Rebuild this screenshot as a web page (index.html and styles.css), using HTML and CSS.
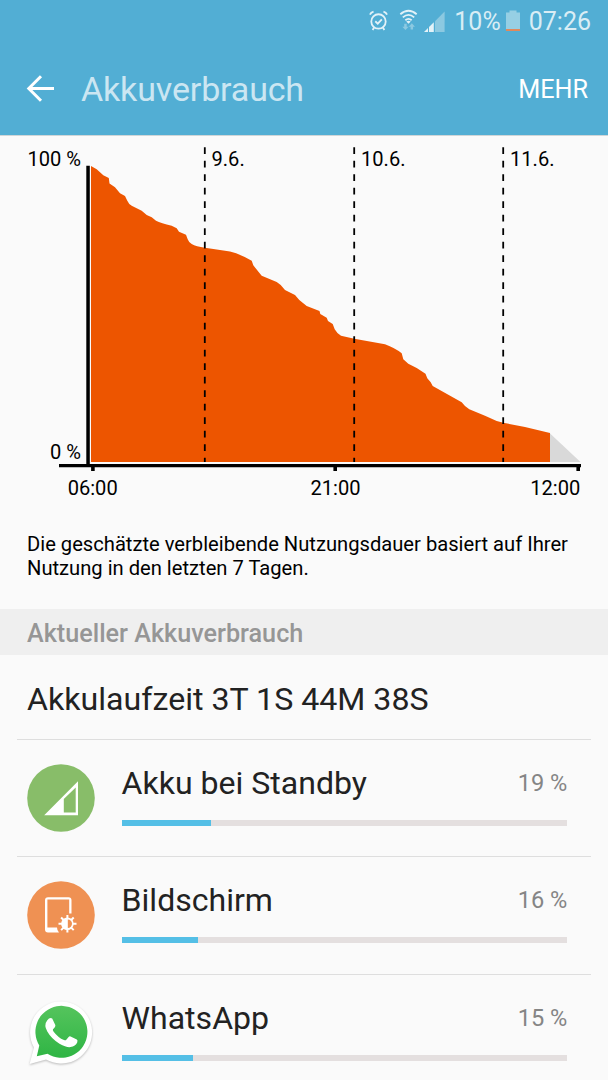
FILE: index.html
```html
<!DOCTYPE html>
<html lang="de">
<head>
    <meta charset="UTF-8">
    <title>Akkuverbrauch</title>
    <link rel="stylesheet" href="styles.css">
</head>
<body>
<header>
    <div class="status-bar">
        <svg class="icon-alarm" width="19" height="21" viewBox="0 0 20 22" fill="none" stroke="#e3f2f8" stroke-width="1.9">
            <circle cx="10" cy="12" r="7.600"/>
            <path d="M6.600 11.800l2.600 2.500 4.300-4.600M1 4.800Q2 2.400 4.800 1.600M19 4.800Q18 2.400 15.200 1.600M5.400 18.400l-1.600 2.600M14.600 18.400l1.600 2.600"/>
        </svg>
        <svg class="icon-wifi" width="19" height="22" viewBox="0 0 20 22" fill="none" stroke="#e3f2f8" stroke-width="1.9">
            <path d="M1.400 5Q10-2.400 18.600 5M4 8.200Q10 3 16 8.200M6.700 11.200Q10 8.400 13.300 11.200"/>
            <path d="M7.600 12.600Q10 11 12.400 12.600L10 15z" fill="#e3f2f8" stroke="none"/>
            <path d="M5.500 15h2.600v3h2l-3.300 3.400L3.500 18h2zM12.200 21h2.600v-3h2l-3.300-3.600-3.300 3.600h2z" fill="#8cc9e1" stroke="none"/>
        </svg>
        <svg class="icon-signal" width="21" height="21" viewBox="0 0 21 21">
            <path d="M11 10.200L20.600.500V21H11z" fill="#8cc9e1"/>
            <path d="M0 21l4-4v4zM5 16l4.800-4.800V21H5z" fill="#e3f2f8"/>
        </svg>
        <span class="level">10%</span>
        <svg class="icon-battery" width="14" height="21" viewBox="0 0 14 21">
            <path d="M0 2.500h3.500V.500h7v2H14V19H0z" fill="#96cfe4"/>
            <path d="M0 19h14v2H0z" fill="#e0895c"/>
        </svg>
        <span class="clock">07:26</span>
    </div>
    <div class="toolbar">
        <svg class="icon-back" width="28" height="28" viewBox="0 0 28 28" fill="none" stroke="#fff" stroke-width="3">
            <path d="M15 1.300L2.800 13.500 15 25.700M2.800 13.500H28"/>
        </svg>
        <h1 class="title">Akkuverbrauch</h1>
        <span class="more">MEHR</span>
    </div>
</header>

<!-- Verlauf -->
<svg class="chart" width="608" height="384" viewBox="0 136 608 384">
    <path class="forecast" d="M549 432.500L580.500 462H549z"/>
    <path class="usage" d="M91 462V166L96.700 169.300 103.300 175.300 108.800 178 109.500 183.500 115 187.300 120 193.300 125 196 127.300 200.700Q129 204.500 131.700 205.700L141.700 210.700 146.700 215 151.700 217.300 156 220.700Q161 223 171.700 225.700L176.700 228.300 179 231.700 186 234.700 187.700 239.300Q188.500 242 191.700 244 196 246.500 205 247.700L230 251.500Q240 254 251.700 260.700L253.300 265.300 261.700 275.700 276.700 282 280.700 285 285 290 295 295 299.300 300 306.700 306 319.500 311 320.300 314 326.700 317.700 328 321 332.700 324 334.700 329.300Q337 333.500 341 335.700L354.300 338.700 385 344.300Q395 348 401.700 353.300L403.300 359.300 408.300 363.700 416.700 368 425.500 373.700 427.300 378.300 430.700 382.300 432.700 386 461.700 402.300 465 406 469.300 409.300 485 415.700 496.700 421 503.300 422.700 525 427 550 433V462z"/>
    <g class="days">
        <path d="M204.800 147.300V462M354.200 147.300V462M503.200 147.300V462"/>
    </g>
    <path class="axis" d="M86.300 165.800h3.500V464H581v3.300h-1V471h-3.600v-3.700H337V471h-3.600v-3.700H94.700V471h-3.600v-3.700H59V464h27.300z"/>
    <g class="labels">
        <text x="81" y="166" text-anchor="end">100 %</text>
        <text x="81" y="459" text-anchor="end">0 %</text>
        <text x="211.500" y="166">9.6.</text>
        <text x="361" y="166">10.6.</text>
        <text x="510" y="166">11.6.</text>
        <text x="92.700" y="494.600" text-anchor="middle">06:00</text>
        <text x="335.500" y="494.600" text-anchor="middle">21:00</text>
        <text x="580.300" y="494.600" text-anchor="end">12:00</text>
    </g>
</svg>
<p class="hint">Die geschätzte verbleibende Nutzungsdauer basiert auf Ihrer Nutzung in den letzten 7 Tagen.</p>

<h2 class="section">Aktueller Akkuverbrauch</h2>
<div class="runtime">Akkulaufzeit 3T 1S 44M 38S</div>

<!-- Verbraucher -->
<div class="list">
    <div class="item">
        <svg class="item-icon" width="68" height="68" viewBox="0 0 68 68">
            <circle cx="34" cy="34" r="33.800" fill="#88bd69"/>
            <path d="M17.200 51.200L51 17.300V51.200zM36.800 35V48.400H48.700V23.400z" fill="#fff" fill-rule="evenodd"/>
        </svg>
        <div class="item-body">
            <div class="item-head"><span class="name">Akku bei Standby</span><span class="percent">19 %</span></div>
            <div class="bar"><div class="bar-fill" style="width: 20.100%"></div></div>
        </div>
    </div>
    <div class="item">
        <svg class="item-icon" width="68" height="68" viewBox="0 0 68 68">
            <circle cx="34" cy="34" r="33.800" fill="#ef9153"/>
            <path d="M18 19.200Q18 16.200 21 16.200H41.500Q44.500 16.200 44.500 19.200V32.500H42.200V18.500H20.400V46.500H30Q30 49.500 32 51.500H21Q18 51.500 18 48.500z" fill="#fff"/>
            <g stroke="#fff" stroke-width="2">
                <path d="M40.400 34v17.600M31.500 42.800h18M34.100 36.500l12.600 12.600M34.100 49.100l12.600-12.600"/>
            </g>
            <circle cx="40.400" cy="42.800" r="6.300" fill="#fff"/>
            <path d="M40.800 38.600a4.200 4.200 0 0 1 0 8.400z" fill="#ef9153"/>
        </svg>
        <div class="item-body">
            <div class="item-head"><span class="name">Bildschirm</span><span class="percent">16 %</span></div>
            <div class="bar"><div class="bar-fill" style="width: 17.100%"></div></div>
        </div>
    </div>
    <div class="item">
        <svg class="item-icon" width="68" height="68" viewBox="0 0 68 68">
            <defs>
                <linearGradient id="wa" x1="0" y1="0" x2="0" y2="1">
                    <stop offset="0" stop-color="#55c45d"/>
                    <stop offset="1" stop-color="#2fb544"/>
                </linearGradient>
            </defs>
            <path class="wa-edge" d="M2.600 65L7 48.500A31 31 0 1 1 19 60.500z"/>
            <path d="M9.800 57.200L12.300 46.500A26 26 0 1 1 20.500 54.800z" fill="url(#wa)"/>
            <path d="M20.300 21.200Q22.500 18.300 25.200 19.400L28.300 25.900Q28.800 27.600 26 30.200 25.500 31 26.500 32.400 31 38.500 37 41 38.500 41.700 39.300 40.800L41.600 37.900Q42.500 37 43.600 37.500L49.800 40.500Q51 41.200 50.200 43.600 48.500 47.300 43.500 48.100 39.500 48.700 32.500 44.800 24.500 40 20.300 32.600 16.500 26 20.300 21.200z" fill="#fff"/>
        </svg>
        <div class="item-body">
            <div class="item-head"><span class="name">WhatsApp</span><span class="percent">15 %</span></div>
            <div class="bar"><div class="bar-fill" style="width: 16%"></div></div>
        </div>
    </div>
</div>
</body>
</html>
```

FILE: styles.css
```css
body {
    margin: 0;
    height: 1080px;
    overflow: hidden;
    background-color: #fafafa;
    color: #222;
    font-family: Roboto, "Liberation Sans", sans-serif;
}

svg {
    display: block;
    flex: none;
}

header {
    height: 135px;
    background-color: #52aed4;
    border-bottom: 1px solid #d0d6d8;
}

.status-bar {
    display: flex;
    align-items: center;
    justify-content: flex-end;
    height: 43px;
    padding-right: 17px;
    color: #d9edf5;
    font-size: 25px;
    line-height: 43px;
}

.icon-alarm {
    margin: 0 11px 3px 0;
}

.icon-wifi {
    margin: 0 6px 3px 0;
}

.icon-signal {
    margin-right: 9px;
}

.icon-battery {
    margin: 0 9px 2px 5px;
}

.toolbar {
    display: flex;
    align-items: center;
    height: 92px;
    padding: 0 20px 0 26px;
}

.title {
    flex: 1;
    margin: 0 0 0 27px;
    color: #cbe6f2;
    font-size: 34px;
    font-weight: normal;
    letter-spacing: -0.15px;
}

.more {
    color: #fff;
    font-size: 25.2px;
}

.usage {
    fill: #ed5500;
}

.forecast {
    fill: #d9d9d9;
}

.days {
    stroke: #000;
    stroke-width: 1.8;
    stroke-dasharray: 6.8 6.7;
}

.labels {
    font-size: 20.1px;
}

.hint {
    margin: 12px 20px 29px 27px;
    color: #000;
    font-size: 20.17px;
    line-height: 24px;
}

.section {
    height: 46px;
    margin: 0;
    padding: 2px 27px 0;
    box-sizing: border-box;
    background-color: #efefef;
    color: #969696;
    font-size: 25.2px;
    font-weight: 500;
    line-height: 46px;
}

.runtime {
    padding: 3px 27px 0;
    height: 81px;
    font-size: 32.15px;
    line-height: 82px;
}

.list {
    margin: 0 17px;
}

.item {
    display: flex;
    height: 117.3px;
    box-sizing: border-box;
    border-top: 1px solid #dedede;
}

.item-icon {
    margin: 24px 27px 0 9.6px;
}

.item-body {
    flex: 1;
    padding: 23px 23.6px 0 0;
}

.item-head {
    display: flex;
    justify-content: space-between;
    font-size: 32.05px;
    line-height: 40px;
}

.percent {
    color: #858585;
    font-size: 23.6px;
}

.bar {
    height: 6px;
    margin-top: 17px;
    background-color: #e4dfdf;
}

.bar-fill {
    height: 6px;
    background-color: #54bfe6;
}

.wa-edge {
    fill: #fff;
    filter: drop-shadow(0 1px 1px rgba(0, 0, 0, 0.25));
}
```
